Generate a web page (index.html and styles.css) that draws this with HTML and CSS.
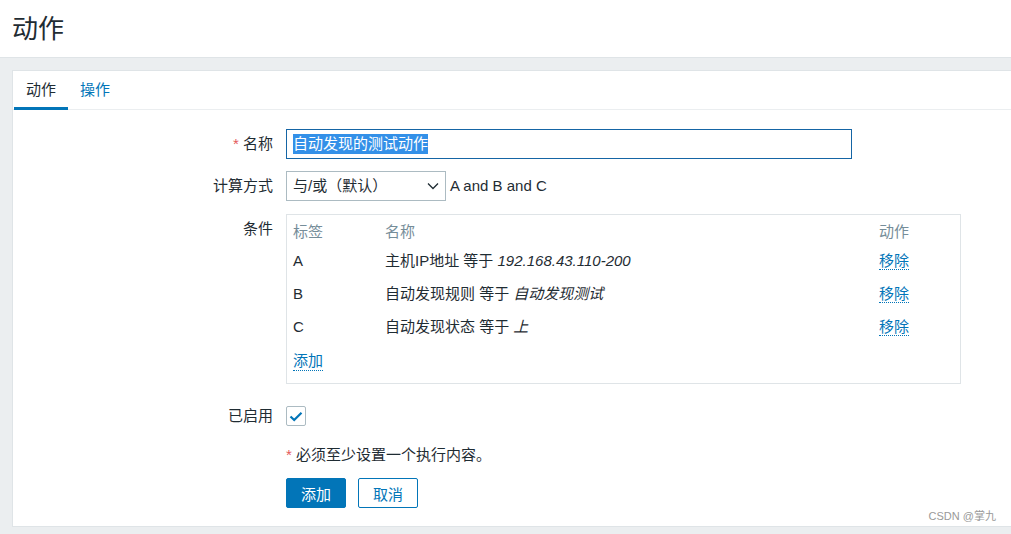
FILE: index.html
```html
<!DOCTYPE html>
<html lang="zh-CN">
<head>
  <meta charset="UTF-8">
  <meta name="viewport" content="width=device-width, initial-scale=1.0">
  <title>动作</title>
  <link rel="stylesheet" href="styles.css">
</head>

<body>
  <header class="page-header">
    <h1>动作</h1>
  </header>

  <main class="card">
    <nav class="tabs">
      <a class="tab active">动作</a>
      <a class="tab">操作</a>
    </nav>

    <div class="form">
      <div class="row">
        <label class="lbl"><span class="req">*</span> 名称</label>
        <div class="field text-input"><span class="selected">自动发现的测试动作</span></div>
      </div>

      <div class="row">
        <label class="lbl">计算方式</label>
        <div class="field select">
          <span>与/或（默认）</span>
          <svg class="chevron" width="12" height="8" viewBox="0 0 12 8"><path d="M1 1.5 L6 6.5 L11 1.5" fill="none" stroke="#1f2c33" stroke-width="1.3"/></svg>
        </div>
        <span class="formula">A and B and C</span>
      </div>

      <div class="row top">
        <label class="lbl lbl-top">条件</label>
        <div class="conditions">
          <div class="cond-row head">
            <span>标签</span><span>名称</span><span>动作</span>
          </div>
          <div class="cond-row">
            <span>A</span>
            <span>主机IP地址 等于 <i>192.168.43.110-200</i></span>
            <span><a class="link">移除</a></span>
          </div>
          <div class="cond-row">
            <span>B</span>
            <span>自动发现规则 等于 <i>自动发现测试</i></span>
            <span><a class="link">移除</a></span>
          </div>
          <div class="cond-row">
            <span>C</span>
            <span>自动发现状态 等于 <i>上</i></span>
            <span><a class="link">移除</a></span>
          </div>
          <div class="add-row"><a class="link">添加</a></div>
        </div>
      </div>

      <div class="row enabled">
        <label class="lbl">已启用</label>
        <span class="checkbox">
          <svg width="14" height="11" viewBox="0 0 14 11"><path d="M1.5 5.5 L5.2 9 L12.5 1.8" fill="none" stroke="#0275b8" stroke-width="2.2"/></svg>
        </span>
      </div>

      <div class="row note">
        <span class="lbl"></span>
        <span><span class="req">*</span> 必须至少设置一个执行内容。</span>
      </div>

      <div class="row buttons">
        <span class="lbl"></span>
        <button class="btn primary">添加</button>
        <button class="btn alt">取消</button>
      </div>
    </div>
  </main>

  <div class="watermark">CSDN @掌九</div>
</body>

</html>
```

FILE: styles.css
```css
body {
  margin: 0;
  background-color: #ebeef0;
  color: #1f2c33;
  font-family: "Liberation Sans", Arial, "Noto Sans CJK SC", sans-serif;
  font-size: 15px;
  line-height: 18px;
  height: 534px;
  overflow: hidden;
  position: relative;
}

.page-header {
  background-color: #fff;
  border-bottom: 1px solid #dfe4e7;
  box-sizing: border-box;
  height: 58px;
}

.page-header h1 {
  margin: 0;
  padding: 12px 0 0 12px;
  font-size: 26px;
  line-height: 34px;
  font-weight: normal;
}

.card {
  margin: 12px 0 0 12px;
  background-color: #fff;
  border: 1px solid #dfe4e7;
  border-right: none;
  height: 457px;
  box-sizing: border-box;
}

.tabs {
  display: flex;
  padding-left: 1px;
  border-bottom: 1px solid #ebeef0;
  height: 39px;
  box-sizing: border-box;
}

.tab {
  padding: 10px 12px 0;
  height: 38px;
  box-sizing: border-box;
  color: #0275b8;
  cursor: pointer;
}

.tab.active {
  color: #1f2c33;
  border-bottom: 3px solid #0275b8;
  height: 39px;
}

.form {
  padding-top: 19px;
}

.row {
  display: flex;
  align-items: center;
}

.row + .row {
  margin-top: 12px;
}

.row.top {
  align-items: flex-start;
  margin-top: 13px;
}

.lbl {
  width: 260px;
  margin-right: 13px;
  text-align: right;
  flex: none;
}

.lbl-top {
  padding-top: 6px;
}

.req {
  color: #e45959;
}

.field {
  height: 30px;
  box-sizing: border-box;
  display: flex;
  align-items: center;
}

.text-input {
  width: 566px;
  border: 1px solid #1565a5;
  padding-left: 6px;
}

.selected {
  background-color: #3390e8;
  color: #fff;
  line-height: 20px;
}

.select {
  width: 160px;
  border: 1px solid #acbbc2;
  padding: 0 6px;
  justify-content: space-between;
}

.formula {
  margin-left: 4px;
}

.conditions {
  width: 675px;
  height: 170px;
  box-sizing: border-box;
  border: 1px solid #dfe4e7;
  padding: 4px 6px;
}

.cond-row {
  display: grid;
  grid-template-columns: 92px 1fr 75px;
  height: 33px;
  align-items: center;
}

.cond-row.head {
  height: 25px;
  color: #768d99;
}

.add-row {
  height: 37px;
  display: flex;
  align-items: center;
}

.link {
  color: #0275b8;
  border-bottom: 1px dotted #0275b8;
  cursor: pointer;
}

.row.enabled {
  margin-top: 22px;
}

.checkbox {
  width: 20px;
  height: 20px;
  box-sizing: border-box;
  border: 1px solid #acbbc2;
  border-radius: 2px;
  display: flex;
  align-items: center;
  justify-content: center;
}

.row.note {
  margin-top: 20px;
}

.row.buttons {
  margin-top: 14px;
}

.btn {
  font-family: inherit;
  font-size: 15px;
  height: 30px;
  width: 60px;
  border-radius: 2px;
  border: 1px solid #0275b8;
  padding: 0;
}

.btn.primary {
  background-color: #0275b8;
  color: #fff;
  margin-right: 12px;
}

.btn.alt {
  background-color: #fff;
  color: #0275b8;
}

.watermark {
  position: absolute;
  right: 15px;
  bottom: 9px;
  font-size: 11px;
  color: #999;
}
```
